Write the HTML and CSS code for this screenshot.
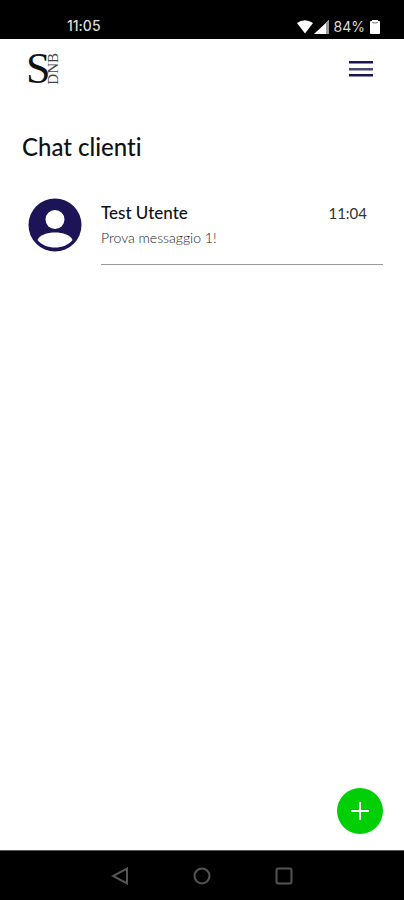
FILE: index.html
```html
<!DOCTYPE html>
<html lang="it">
<head>
    <meta charset="UTF-8">
    <meta name="viewport" content="width=device-width, initial-scale=1.0">
    <title>Chat clienti</title>
    <link rel="stylesheet" href="styles.css">
</head>
<body>
    <!-- Barra di stato -->
    <div class="status-bar">
        <span class="clock">11:05</span>
        <div class="status-icons">
            <svg class="signals" width="34" height="16" viewBox="0 0 34 16">
                <path d="M1 4Q8.500-1.500 17 4L9 14.500Z" fill="#fff"/>
                <path d="M18 15L33 1V15Z" fill="#fff"/>
                <path d="M30 4L33 1V15H30Z" fill="#999"/>
            </svg>
            <span class="battery-level">84%</span>
            <svg width="12" height="16" viewBox="0 0 12 16">
                <path d="M3 1H9V2H10Q11 2 11 3V14Q11 15 10 15H2Q1 15 1 14V3Q1 2 2 2H3Z" fill="#fff"/>
                <path d="M3 3.500Q6 4.500 9 3.500" stroke="#777" fill="none"/>
            </svg>
        </div>
    </div>

    <header class="header">
        <a href="#" class="logo" aria-label="SDNB">
            <span class="logo-s">S</span>
            <span class="logo-dnb">DNB</span>
        </a>
        <button class="menu-btn" type="button" aria-label="Menu">
            <svg width="24" height="18" viewBox="0 0 24 18" fill="#1c1650">
                <rect y="1" width="24" height="2.500"/>
                <rect y="8" width="24" height="2.500" fill="#4a4673"/>
                <rect y="14" width="24" height="2.500"/>
            </svg>
        </button>
    </header>

    <main class="content">
        <h1>Chat clienti</h1>

        <!-- Elenco chat -->
        <ul class="chat-list">
            <li>
                <a href="#" class="chat">
                    <svg class="avatar" width="54" height="54" viewBox="0 0 54 54">
                        <circle cx="27" cy="27" r="26.500" fill="#1b1456"/>
                        <circle cx="27" cy="21.500" r="9.500" fill="#fff"/>
                        <path d="M9.500 42C13 32 41 32 44.500 42C37 52 17 52 9.500 42Z" fill="#fff"/>
                    </svg>
                    <div class="chat-body">
                        <div class="chat-top">
                            <span class="chat-name">Test Utente</span>
                            <span class="chat-time">11:04</span>
                        </div>
                        <p class="chat-text">Prova messaggio 1!</p>
                    </div>
                </a>
            </li>
        </ul>

        <button class="new-chat" type="button" aria-label="Nuova chat">
            <svg width="20" height="20" viewBox="0 0 20 20">
                <path d="M10 1V19M1 10H19" stroke="#fff" stroke-width="2"/>
            </svg>
        </button>
    </main>

    <!-- Barra di navigazione -->
    <nav class="nav-bar">
        <button type="button" aria-label="Indietro">
            <svg width="18" height="18" viewBox="0 0 18 18"><path d="M16 1.500V16.500L2 9Z"/></svg>
        </button>
        <button type="button" aria-label="Home">
            <svg width="18" height="18" viewBox="0 0 18 18"><circle cx="9" cy="9" r="7.500"/></svg>
        </button>
        <button type="button" aria-label="Recenti">
            <svg width="18" height="18" viewBox="0 0 18 18"><rect x="1.500" y="1.500" width="15" height="15" rx="2"/></svg>
        </button>
    </nav>
</body>
</html>
```
FILE: styles.css
```css
* {
    box-sizing: border-box;
    margin: 0;
    padding: 0;
}

body {
    font-family: Lato, sans-serif;
    font-variant-ligatures: none;
    background: #fff;
    color: #111;
    min-height: 100vh;
    display: flex;
    flex-direction: column;
}

button {
    background: none;
    border: none;
    cursor: pointer;
}

a {
    color: inherit;
    text-decoration: none;
}

svg {
    display: block;
}

/* Barra di stato */
.status-bar {
    background: #000;
    color: #ddd;
    height: 39px;
    padding: 14px 23px 0 67px;
    display: flex;
    justify-content: space-between;
    font-family: Inter, sans-serif;
    font-size: 14px;
    line-height: 24px;
}

.clock {
    font-weight: 500;
}

.status-icons {
    display: flex;
    align-items: center;
    gap: 4px;
}

/* Intestazione */
.header {
    display: flex;
    justify-content: space-between;
    align-items: center;
    height: 60px;
    padding: 0 31px 0 26px;
}

.logo {
    display: flex;
    align-items: center;
    font-family: "Liberation Serif", serif;
    color: #111;
}

.logo-s {
    font-size: 44px;
    line-height: 44px;
    width: 20px;
}

.logo-dnb {
    font-size: 15px;
    line-height: 14px;
    color: #444;
    writing-mode: vertical-rl;
    transform: rotate(180deg);
}

/* Contenuto */
.content {
    flex: 1;
    display: flex;
    flex-direction: column;
    padding: 32px 21px 16px 22px;
}

h1 {
    font-size: 24px;
    line-height: 32px;
    font-weight: 500;
}

.chat-list {
    list-style: none;
    margin-top: 35px;
}

.chat {
    display: flex;
    gap: 19px;
    padding-left: 6px;
}

.chat-body {
    flex: 1;
    padding: 5px 0 18px;
    border-bottom: 1px solid #999;
}

.chat-top {
    display: flex;
    justify-content: space-between;
    padding-right: 16px;
    line-height: 20px;
}

.chat-name {
    font-size: 17px;
    font-weight: 500;
}

.chat-time {
    font-size: 15px;
    color: #333;
}

.chat-text {
    font-size: 14px;
    font-weight: 300;
    line-height: 16px;
    margin-top: 7px;
    color: #222;
}

.new-chat {
    display: flex;
    align-items: center;
    justify-content: center;
    width: 46px;
    height: 46px;
    margin-top: auto;
    align-self: flex-end;
    border-radius: 50%;
    background: #00cf05;
}

/* Barra di navigazione */
.nav-bar {
    display: flex;
    justify-content: center;
    align-items: center;
    gap: 64px;
    height: 50px;
    background: #000;
    border-top: 1px solid #555;
}

.nav-bar svg {
    fill: none;
    stroke: #555;
    stroke-width: 2;
}
```
